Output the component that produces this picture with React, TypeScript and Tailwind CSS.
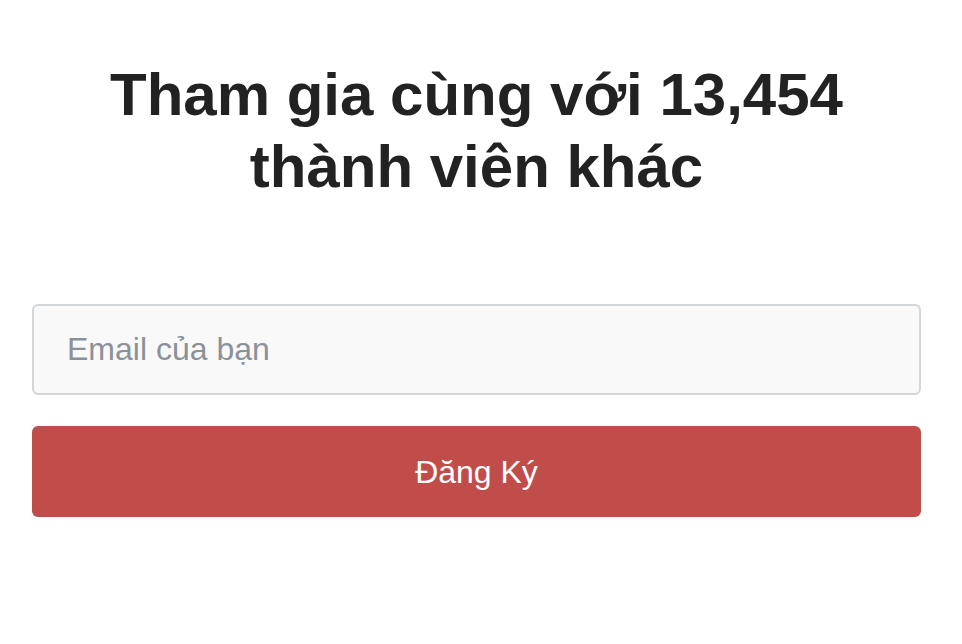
export default function App() {
  return (
    <div className="min-h-screen bg-white pl-8 pr-[41px] pt-[59px] font-['Liberation_Sans',Arial,sans-serif]">
      <h1 className="text-center text-[60px] font-bold leading-[72px] text-[#222222]">
        Tham gia cùng với 13,454
        <br />
        thành viên khác
      </h1>
      <form className="mt-[101px] flex flex-col gap-[31px]" onSubmit={(e) => e.preventDefault()}>
        <input
          type="email"
          placeholder="Email của bạn"
          className="h-[91px] w-full rounded-md border-2 border-[#d3d6d9] bg-[#f9f9f9] px-[33px] text-[32px] text-[#333] outline-none placeholder:text-[#8b9199]"
        />
        <button
          type="submit"
          className="h-[91px] w-full rounded-md bg-[#c04d4a] text-[32px] text-white"
        >
          Đăng Ký
        </button>
      </form>
    </div>
  );
}
